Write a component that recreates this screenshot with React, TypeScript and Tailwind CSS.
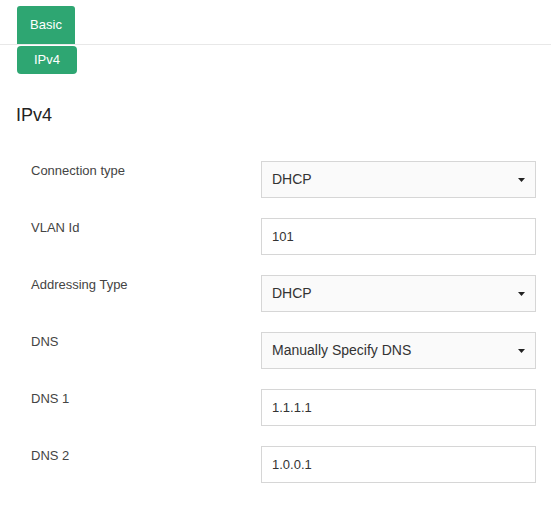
import React from 'react';

type Field = {
  label: string;
  value: string;
  kind: 'select' | 'input';
};

const fields: Field[] = [
  { label: 'Connection type', value: 'DHCP', kind: 'select' },
  { label: 'VLAN Id', value: '101', kind: 'input' },
  { label: 'Addressing Type', value: 'DHCP', kind: 'select' },
  { label: 'DNS', value: 'Manually Specify DNS', kind: 'select' },
  { label: 'DNS 1', value: '1.1.1.1', kind: 'input' },
  { label: 'DNS 2', value: '1.0.0.1', kind: 'input' },
];

const Caret = () => (
  <svg width="7" height="4" viewBox="0 0 7 4" className="shrink-0">
    <path d="M0 0H7L3.5 4Z" fill="#222" />
  </svg>
);

function Row({ field }: { field: Field }) {
  return (
    <div className="flex items-start">
      <div className="w-[261px] shrink-0 pl-[31px] text-[13px] leading-5 text-[#444]">{field.label}</div>
      {field.kind === 'select' ? (
        <div className="flex h-[37px] w-[275px] items-center justify-between border border-[#d6d6d6] bg-[#fafafa] pl-[10px] pr-[10px] text-[14px] text-[#333]">
          <span>{field.value}</span>
          <Caret />
        </div>
      ) : (
        <div className="flex h-[37px] w-[275px] items-center border border-[#d6d6d6] bg-white pl-[10px] text-[13px] text-[#333]">
          {field.value}
        </div>
      )}
    </div>
  );
}

export default function App() {
  return (
    <div className="min-h-[531px] w-[551px] bg-white font-['Liberation_Sans',Arial,sans-serif]">
      {/* tabs */}
      <div className="flex border-b border-[#e8e8e8] pl-[17px] pt-[6px]">
        <div className="flex h-[38px] w-[58px] items-center justify-center rounded-t-[3px] bg-[#2ea672] text-[13px] text-white">
          Basic
        </div>
      </div>
      <div className="mt-px pl-[17px]">
        <div className="flex h-[28px] w-[60px] items-center justify-center rounded-[4px] bg-[#2ea672] text-[13px] text-white">
          IPv4
        </div>
      </div>

      <h2 className="mt-[29px] pl-[16px] text-[18px] leading-6 text-[#222]">IPv4</h2>

      <div className="mt-[34px] flex flex-col gap-[20px]">
        {fields.map((f) => (
          <Row key={f.label} field={f} />
        ))}
      </div>
    </div>
  );
}
